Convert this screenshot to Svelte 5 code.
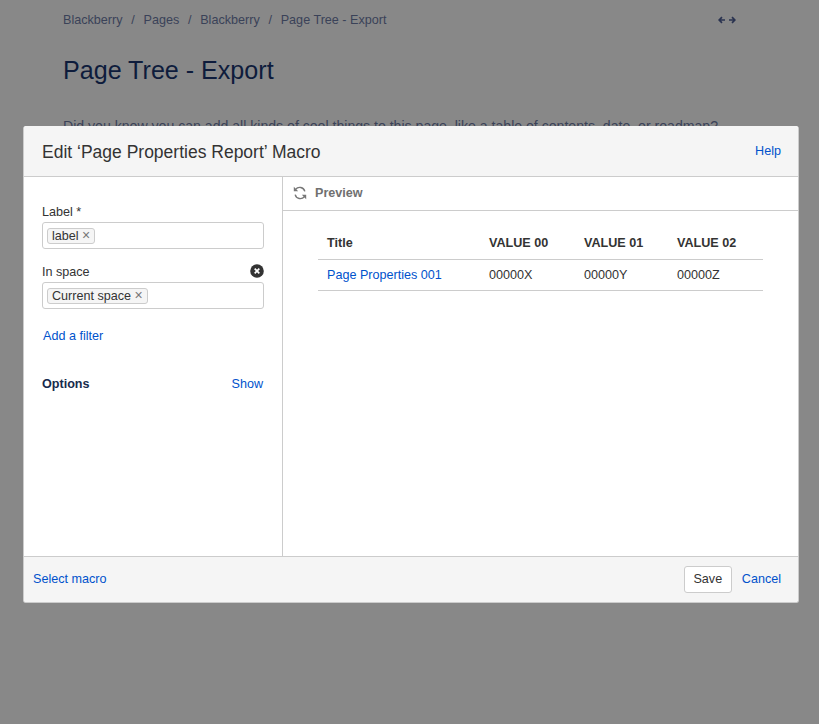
<script>
  const rows = [['Page Properties 001', '00000X', '00000Y', '00000Z']];
</script>

<div class="page">
  <div class="crumbs">
    <span>Blackberry</span><i>/</i><span>Pages</span><i>/</i><span>Blackberry</span><i>/</i><span>Page Tree - Export</span>
    <svg class="expand" width="18" height="8" viewBox="0 0 18 8" aria-hidden="true">
      <path d="M1 4h6M4 1.200 1.200 4 4 6.800M17 4h-6M14 1.200 16.800 4 14 6.800" fill="none" stroke="#2a3350" stroke-width="1.700"/>
    </svg>
  </div>
  <h1>Page Tree - Export</h1>
  <p>Did you know you can add all kinds of cool things to this page, like a table of contents, date, or roadmap?</p>
</div>

<div class="dialog">
  <header>
    <h2>Edit ‘Page Properties Report’ Macro</h2>
    <a href="#help" class="help">Help</a>
  </header>
  <div class="body">
    <aside>
      <div class="field">
        <div class="lab">Label *</div>
        <div class="input"><span class="tag">label <b>×</b></span></div>
      </div>
      <div class="field">
        <div class="lab spread">In space
          <svg width="14" height="14" viewBox="0 0 14 14" aria-hidden="true">
            <circle cx="7" cy="7" r="6.800" fill="#333"/>
            <path d="M4.700 4.700l4.600 4.600M9.300 4.700l-4.600 4.600" stroke="#fff" stroke-width="1.700"/>
          </svg>
        </div>
        <div class="input"><span class="tag">Current space <b>×</b></span></div>
      </div>
      <a href="#filter" class="filter">Add a filter</a>
      <div class="options"><strong>Options</strong><a href="#show">Show</a></div>
    </aside>
    <section>
      <div class="preview">
        <svg width="14" height="14" viewBox="0 0 14 14" aria-hidden="true">
          <path d="M2.600 3.400A5.200 5.200 0 0 1 11.800 5.400M11.400 10.600A5.200 5.200 0 0 1 2.200 8.600" fill="none" stroke="#777" stroke-width="1.400"/>
          <path d="M.8.800v4.400h4.400zM13.200 13.200V8.800H8.800z" fill="#777"/>
        </svg>
        <span>Preview</span>
      </div>
      <table>
        <thead><tr><th class="c1">Title</th><th class="c2">VALUE 00</th><th class="c3">VALUE 01</th><th>VALUE 02</th></tr></thead>
        <tbody>
          {#each rows as r}
            <tr><td><a href="#p">{r[0]}</a></td><td>{r[1]}</td><td>{r[2]}</td><td>{r[3]}</td></tr>
          {/each}
        </tbody>
      </table>
    </section>
  </div>
  <footer>
    <a href="#select">Select macro</a>
    <div class="actions"><button>Save</button><a href="#cancel">Cancel</a></div>
  </footer>
</div>

<style>
  :global(body) { margin: 0; background: #888; font-family: "Liberation Sans", Arial, sans-serif; }
  a { color: #0052cc; text-decoration: none; }
  .page { height: 724px; box-sizing: border-box; padding: 13px 0 0 63px; width: 736px; overflow: hidden; color: #3a4258; }
  .crumbs { display: flex; align-items: center; font-size: 12.600px; line-height: 14px; }
  .crumbs i { font-style: normal; margin: 0 8.750px; }
  .expand { margin-left: auto; }
  h1 { font-size: 25.100px; font-weight: 400; line-height: 28px; margin: 29px 0 0; color: #0e1c3c; }
  p { font-size: 14.100px; line-height: 20px; margin: 32px 0 0; white-space: nowrap; color: #3a4258; }
  .dialog { position: absolute; left: 23px; top: 126px; width: 776px; height: 477px; box-sizing: border-box; border-radius: 3px; background: #fff; overflow: hidden; display: flex; flex-direction: column; border: 1px solid #ccc; border-width: 0 1px 1px 1px; color: #333; font-size: 12.600px; }
  header { height: 50px; flex: none; background: #f5f5f5; border-bottom: 1px solid #ccc; display: flex; justify-content: space-between; }
  h2 { margin: 0; padding: 16px 0 0 18px; font-size: 17.500px; font-weight: 400; line-height: 20px; color: #333; }
  .help { margin: 18px 17px 0 0; line-height: 15px; }
  .body { flex: 1; display: flex; min-height: 0; }
  aside { flex: none; border-right: 1px solid #ccc; padding: 28px 18px 0 18px; width: 222px; }
  .field { margin-bottom: 16px; }
  .lab { line-height: 15px; margin-bottom: 2px; color: #333; }
  .spread { display: flex; justify-content: space-between; align-items: center; }
  .spread svg { margin-top: -3px; }
  .input { border: 1px solid #ccc; border-radius: 3px; padding: 5px 4px; height: 15px; display: flex; align-items: center; background: #fff; }
  .tag { background: #f5f5f5; border: 1px solid #ccc; border-radius: 3px; padding: 0 4px; line-height: 14px; color: #333; white-space: nowrap; }
  .tag b { font-weight: 400; font-size: 14px; line-height: 12px; color: #777; }
  .filter { display: block; margin: 20px 0 0 1px; line-height: 15px; }
  .options { display: flex; justify-content: space-between; margin-top: 33px; line-height: 15px; padding-right: 1px; }
  .options strong { color: #172b4d; }
  section { flex: 1; min-width: 0; }
  .preview { border-bottom: 1px solid #ccc; display: flex; align-items: center; gap: 8px; padding-left: 10px; padding-bottom: 1px; box-sizing: border-box; height: 34px; font-weight: 700; color: #707070; }
  table { border-collapse: collapse; margin: 15px 0 0 35px; width: 445px; table-layout: fixed; }
  th, td { text-align: left; padding: 0 9px; font-size: 12.600px; color: #333; }
  th { height: 33px; border-bottom: 1px solid #ccc; }
  td { height: 30px; border-bottom: 1px solid #ccc; }
  .c1 { width: 144px; }
  .c2 { width: 77px; }
  .c3 { width: 75px; }
  footer { flex: none; background: #f5f5f5; border-top: 1px solid #ccc; display: flex; justify-content: space-between; align-items: center; padding: 0 17px 2px 9px; box-sizing: border-box; height: 46px; }
  .actions { display: flex; align-items: center; gap: 10px; }
  button { width: 48px; height: 27px; margin-top: 1px; font: inherit; color: #333; background: #fff; border: 1px solid #ccc; border-radius: 3px; padding: 0; }
</style>
